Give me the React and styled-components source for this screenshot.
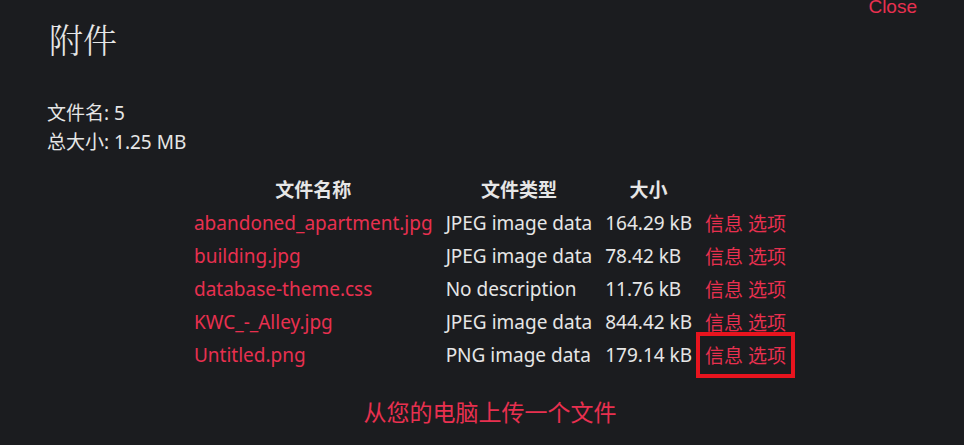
import React from "react";
import styled, { createGlobalStyle } from "styled-components";

const files = [
    { name: "abandoned_apartment.jpg", type: "JPEG image data", size: "164.29 kB" },
    { name: "building.jpg", type: "JPEG image data", size: "78.42 kB" },
    { name: "database-theme.css", type: "No description", size: "11.76 kB" },
    { name: "KWC_-_Alley.jpg", type: "JPEG image data", size: "844.42 kB" },
    { name: "Untitled.png", type: "PNG image data", size: "179.14 kB", marked: true },
];

const App = () => {
    return (
        <Page>
            <GlobalStyle />
            <TopBar>
                <CloseLink href="#">Close</CloseLink>
            </TopBar>
            <Title>附件</Title>
            <Summary>
                <p>文件名: 5</p>
                <p>总大小: 1.25 MB</p>
            </Summary>
            <Table>
                <HeadCell>文件名称</HeadCell>
                <HeadCell>文件类型</HeadCell>
                <HeadCell>大小</HeadCell>
                <HeadCell />
                {files.map((f) => (
                    <React.Fragment key={f.name}>
                        <Cell><Link href="#">{f.name}</Link></Cell>
                        <Cell>{f.type}</Cell>
                        <Cell>{f.size}</Cell>
                        <Cell>
                            <Actions $marked={f.marked}>
                                <Link href="#">信息</Link> <Link href="#">选项</Link>
                            </Actions>
                        </Cell>
                    </React.Fragment>
                ))}
            </Table>
            <Upload>
                <UploadLink href="#">从您的电脑上传一个文件</UploadLink>
            </Upload>
        </Page>
    );
};

const GlobalStyle = createGlobalStyle`
    html, body {
        margin: 0;
        background: #1b1c1f;
    }
    body {
        font-family: "Noto Sans", "Noto Sans CJK SC", sans-serif;
        color: #e6e6e6;
    }
`;

const Page = styled.div`
    width: 964px;
    height: 445px;
    box-sizing: border-box;
    padding: 0 31px 0 47px;
    overflow: hidden;
`;

const TopBar = styled.div`
    display: flex;
    justify-content: flex-end;
    height: 0;
    padding-right: 16px;
`;

const CloseLink = styled.a`
    margin-top: -5px;
    font-family: "Liberation Sans", "Noto Sans", sans-serif;
    font-size: 19px;
    line-height: 24px;
    color: #e8304f;
    text-decoration: none;
`;

const Title = styled.h1`
    margin: 18px 0 0 2px;
    font-family: "Noto Serif CJK SC", "Noto Sans CJK SC", serif;
    font-size: 34px;
    font-weight: 300;
    line-height: 41px;
    color: #e6e6e6;
`;

const Summary = styled.div`
    margin-top: 40px;
    font-size: 19px;
    line-height: 29px;

    p {
        margin: 0;
    }
`;

const Table = styled.div`
    display: grid;
    grid-template-columns: repeat(4, auto);
    grid-auto-rows: 33px;
    justify-content: center;
    column-gap: 13px;
    margin-top: 16px;
    font-size: 19px;
`;

const HeadCell = styled.div`
    display: flex;
    align-items: center;
    justify-content: center;
    height: 32px;
    font-weight: 700;
`;

const Cell = styled.div`
    display: flex;
    align-items: center;
    white-space: nowrap;
`;

const Link = styled.a`
    color: #e8304f;
    text-decoration: none;
`;

const Actions = styled.span`
    white-space: nowrap;
    outline: ${({ $marked }) => ($marked ? "4px solid #e8141e" : "none")};
    outline-offset: 5px;
`;

const Upload = styled.div`
    display: flex;
    justify-content: center;
    margin-top: 23px;
`;

const UploadLink = styled.a`
    font-size: 23px;
    color: #e8304f;
    text-decoration: none;
`;

export default App;
